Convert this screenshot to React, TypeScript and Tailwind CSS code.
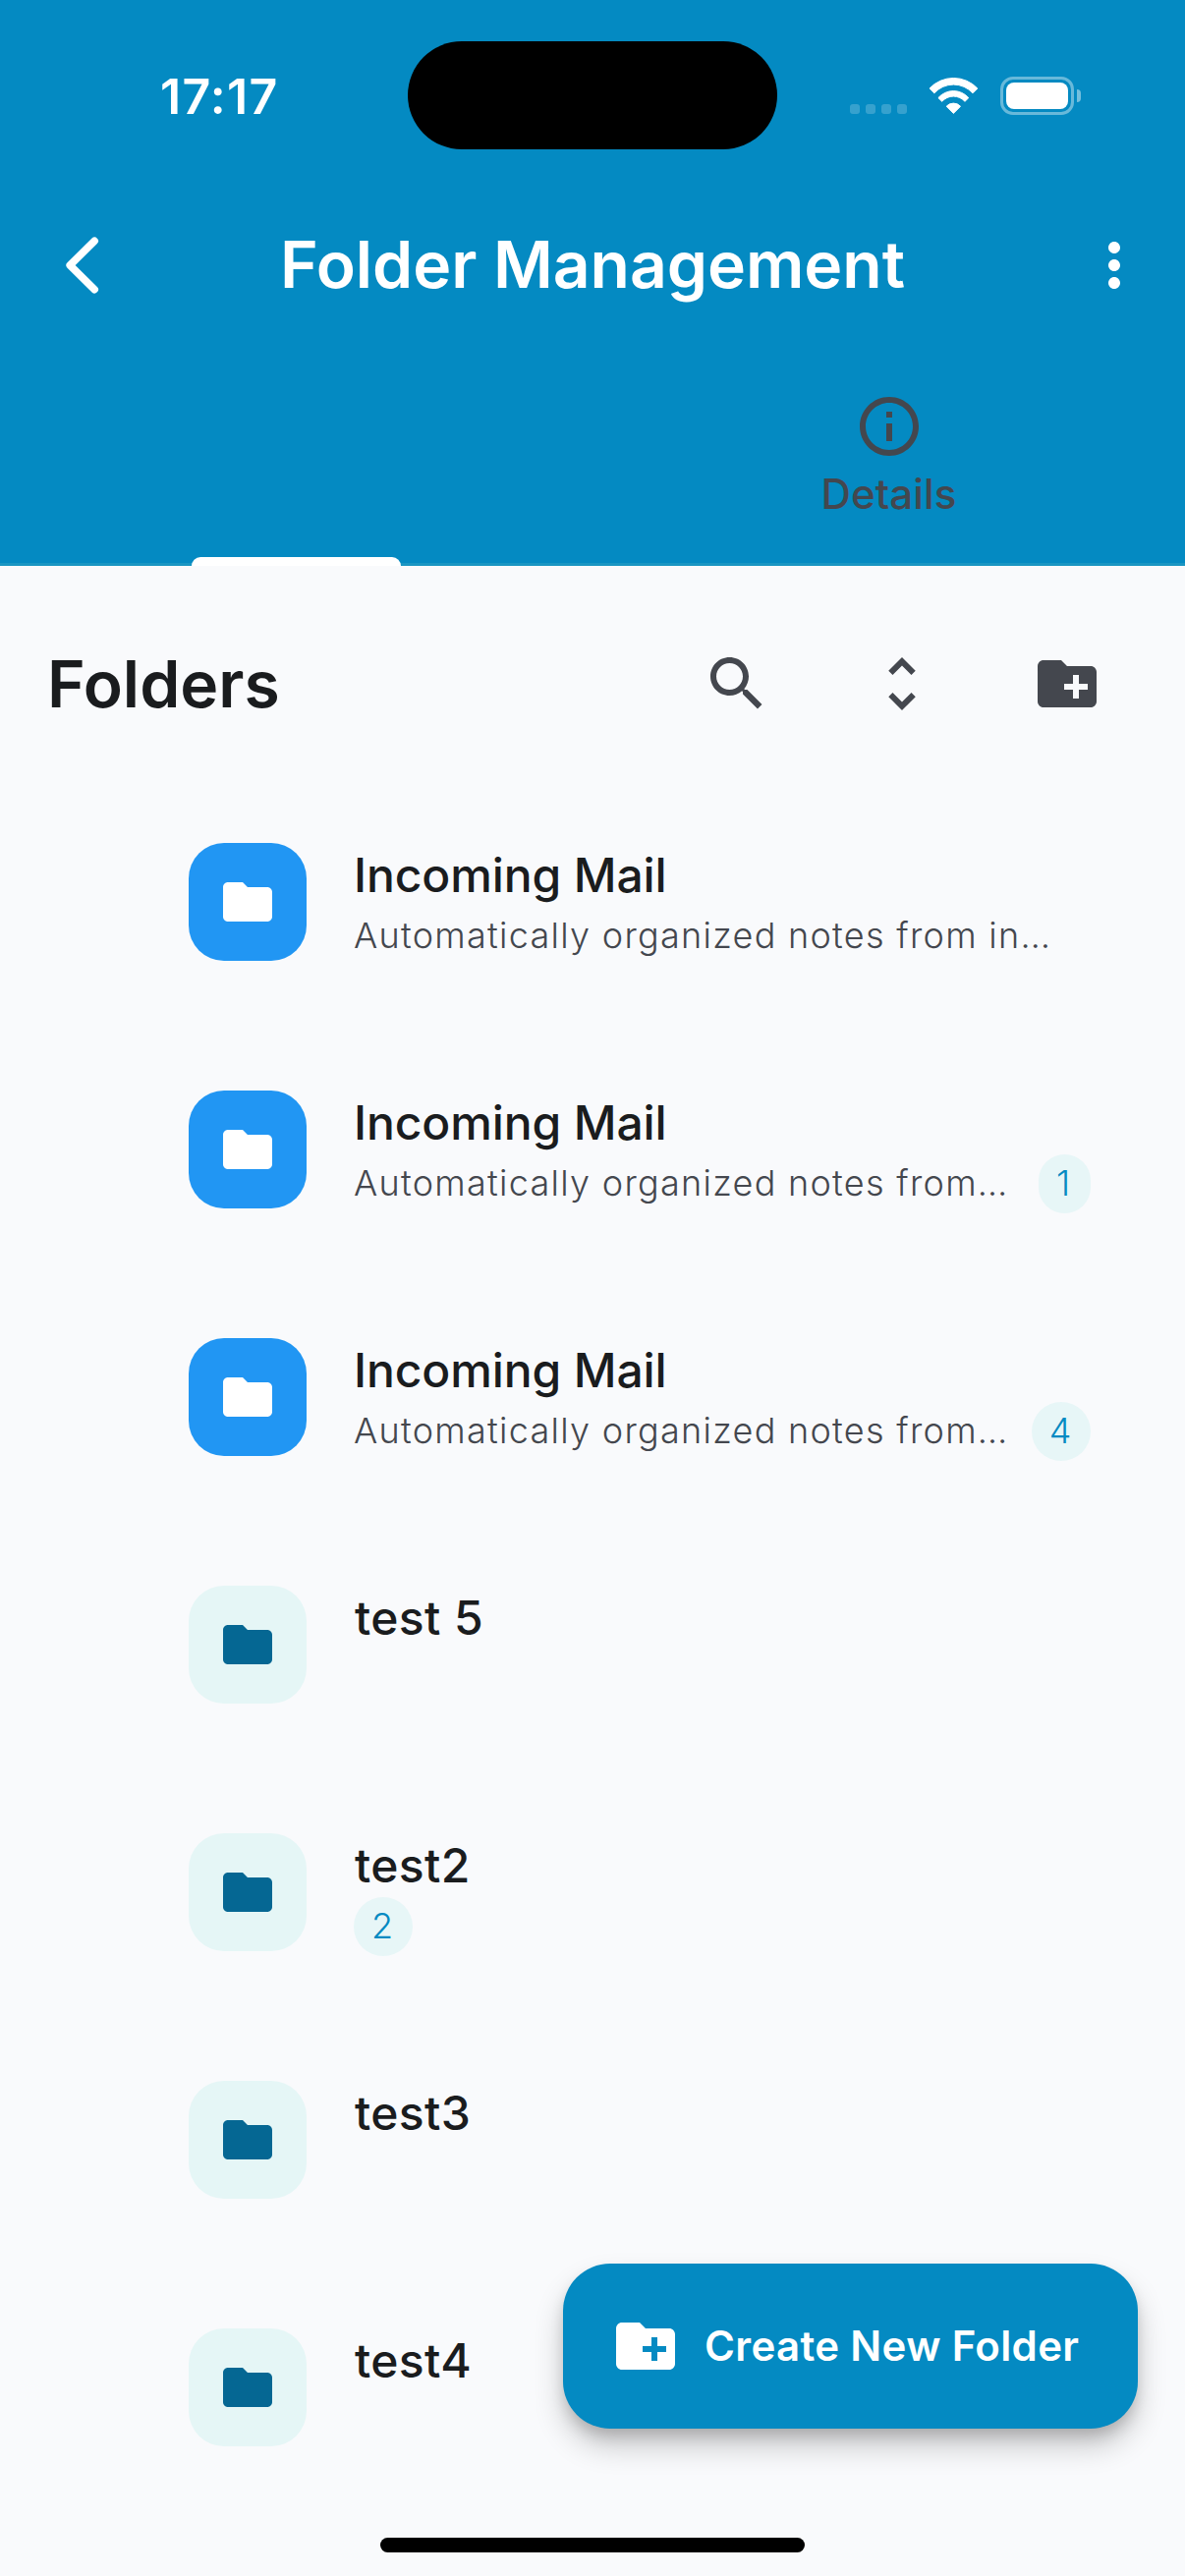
type IconProps = { className?: string };

const MoreIcon = ({ className }: IconProps) => (
  <svg viewBox="0 0 24 24" fill="currentColor" className={className}>
    <path d="M12 8c1.1 0 2-.9 2-2s-.9-2-2-2-2 .9-2 2 .9 2 2 2zm0 2c-1.1 0-2 .9-2 2s.9 2 2 2 2-.9 2-2-.9-2-2-2zm0 6c-1.1 0-2 .9-2 2s.9 2 2 2 2-.9 2-2-.9-2-2-2z" />
  </svg>
);

const InfoIcon = ({ className }: IconProps) => (
  <svg viewBox="0 0 24 24" fill="currentColor" className={className}>
    <path d="M11 7h2v2h-2zm0 4h2v6h-2zm1-9C6.48 2 2 6.48 2 12s4.48 10 10 10 10-4.48 10-10S17.52 2 12 2zm0 18c-4.41 0-8-3.59-8-8s3.59-8 8-8 8 3.59 8 8-3.59 8-8 8z" />
  </svg>
);

const SearchIcon = ({ className }: IconProps) => (
  <svg viewBox="0 0 24 24" fill="currentColor" className={className}>
    <path d="M15.5 14h-.79l-.28-.27C15.41 12.59 16 11.11 16 9.5 16 5.91 13.09 3 9.5 3S3 5.91 3 9.5 5.91 16 9.5 16c1.61 0 3.09-.59 4.23-1.57l.27.28v.79l5 4.99L20.49 19l-4.99-5zm-6 0C7.01 14 5 11.99 5 9.5S7.01 5 9.5 5 14 7.01 14 9.5 11.99 14 9.5 14z" />
  </svg>
);

const UnfoldIcon = ({ className }: IconProps) => (
  <svg viewBox="0 0 24 24" fill="currentColor" className={className}>
    <path d="M12 5.83L15.17 9l1.41-1.41L12 3 7.41 7.59 8.83 9 12 5.83zm0 12.34L8.83 15l-1.41 1.41L12 21l4.59-4.59L15.17 15 12 18.17z" />
  </svg>
);

const FolderIcon = ({ className }: IconProps) => (
  <svg viewBox="0 0 24 24" fill="currentColor" className={className}>
    <path d="M10 4H4c-1.1 0-1.99.9-1.99 2L2 18c0 1.1.9 2 2 2h16c1.1 0 2-.9 2-2V8c0-1.1-.9-2-2-2h-8l-2-2z" />
  </svg>
);

const NewFolderIcon = ({ className }: IconProps) => (
  <svg viewBox="0 0 24 24" fill="currentColor" className={className}>
    <path d="M20 6h-8l-2-2H4c-1.11 0-1.99.89-1.99 2L2 18c0 1.11.89 2 2 2h16c1.11 0 2-.89 2-2V8c0-1.11-.89-2-2-2zm-1 8h-3v3h-2v-3h-3v-2h3V9h2v3h3v2z" />
  </svg>
);

type Folder = { name: string; note?: string; count?: number; mail?: boolean };

const folders: Folder[] = [
  { name: 'Incoming Mail', note: 'Automatically organized notes from in…', mail: true },
  { name: 'Incoming Mail', note: 'Automatically organized notes from…', count: 1, mail: true },
  { name: 'Incoming Mail', note: 'Automatically organized notes from…', count: 4, mail: true },
  { name: 'test 5' },
  { name: 'test2', count: 2 },
  { name: 'test3' },
  { name: 'test4' },
];

function StatusBar() {
  return (
    <div className="grid h-[186px] grid-cols-[415px_376px_415px] grid-rows-[110px] items-center pt-[42px]">
      <div className="pt-[2px] pl-[163px] text-[50px] leading-[60px] font-semibold tracking-[1.3px]">17:17</div>
      <div className="h-[110px] rounded-full bg-black" />
      <div className="flex h-10 items-end pl-[74px]">
        <div className="mb-px flex gap-[6px]">
          <span className="h-[10px] w-[10px] rounded-[3px] bg-white/20" />
          <span className="h-[10px] w-[10px] rounded-[3px] bg-white/20" />
          <span className="h-[10px] w-[10px] rounded-[3px] bg-white/20" />
          <span className="h-[10px] w-[10px] rounded-[3px] bg-white/20" />
        </div>
        <svg viewBox="0 0 51 37" className="mb-px ml-[22px] h-[37px] w-[51px] overflow-visible" fill="white" stroke="white" strokeWidth="1" strokeLinejoin="round">
          <path d="M1 11A33.5 33.5 0 0 1 49.8 11L45 15.8A26.4 26.4 0 0 0 5.8 15.8Z" />
          <path d="M9.9 20.6A20.5 20.5 0 0 1 40.8 20.6L37 24.3A15.6 15.6 0 0 0 13.7 24.3Z" />
          <path d="M18.2 29.3A9.6 9.6 0 0 1 32.5 29.3L25.35 36.4Z" />
        </svg>
        <div className="ml-[22px] h-[39px] w-[75px] rounded-[13px] border-3 border-white/40 p-[3px]">
          <div className="h-full w-full rounded-[8px] bg-white" />
        </div>
        <div className="mb-[13px] ml-[3px] h-[13px] w-[4px] rounded-r-full bg-white/45" />
      </div>
    </div>
  );
}

function AppBar() {
  return (
    <div className="grid h-[168px] grid-cols-[1fr_auto_1fr] items-center pr-9 pl-16">
      <svg viewBox="0 0 40 64" className="h-16 w-10" fill="none" stroke="white" strokeWidth="7.6" strokeLinecap="round" strokeLinejoin="round">
        <path d="M32.2 7.3L7.2 32L32.2 56.7" />
      </svg>
      <h1 className="-ml-7 pb-[2px] text-[66px] leading-[84px] font-semibold tracking-[-0.05px] whitespace-nowrap">Folder Management</h1>
      <MoreIcon className="h-[72px] w-[72px] justify-self-end" />
    </div>
  );
}

function Tabs() {
  return (
    <div className="grid h-[222px] grid-cols-2 border-b-3 border-[#1a96c2]">
      <div className="-mb-[3px] flex items-end justify-center">
        <div className="h-[9px] w-[213px] rounded-t-[9px] bg-white" />
      </div>
      <div className="flex flex-col items-center pt-[44px] text-[#44474e]">
        <InfoIcon className="h-[72px] w-[72px]" />
        <span className="text-[42px] leading-[66px] font-medium tracking-[0.1px]">Details</span>
      </div>
    </div>
  );
}

function FolderRow({ folder }: { folder: Folder }) {
  return (
    <li className="flex h-[252px] pt-[66px] pr-24 pl-48">
      <div
        className={
          folder.mail
            ? 'flex h-[120px] w-[120px] items-center justify-center rounded-[36px] bg-[#2196f3] text-white'
            : 'flex h-[120px] w-[120px] items-center justify-center rounded-[36px] bg-[#e5f6f6] text-[#056793]'
        }
      >
        <FolderIcon className="h-[60px] w-[60px]" />
      </div>
      <div className="ml-12 flex min-w-0 flex-1 flex-col">
        <div className={folder.mail ? 'h-[65px] text-[48px] leading-[65px] font-medium tracking-[-0.12px]' : 'h-[65px] pl-px text-[48px] leading-[65px] font-medium tracking-[0.4px]'}>
          {folder.name}
        </div>
        <div className="flex h-[60px] items-center text-[36px] leading-[60px] font-light">
          {folder.note && <span className="flex-1 pb-[2px] tracking-[1.28px] whitespace-nowrap text-[#44474e]">{folder.note}</span>}
          {folder.count !== undefined && (
            <span className="h-[60px] min-w-[53px] rounded-[30px] bg-[#e7f6f7] px-[18px] leading-[58px] tracking-[1.5px] text-[#048ac2]">{folder.count}</span>
          )}
        </div>
      </div>
    </li>
  );
}

export default function App() {
  return (
    <div className="relative h-[2622px] w-[1206px] overflow-hidden bg-[#f9fafc] font-['Inter',sans-serif] text-[#1a1c1e]">
      <header className="bg-[#048ac2] text-white">
        <StatusBar />
        <AppBar />
        <Tabs />
      </header>
      <main className="pt-6">
        <div className="flex h-48 items-center justify-between pr-12 pl-12">
          <h2 className="text-[66px] leading-[84px] font-semibold">Folders</h2>
          <div className="flex gap-6 text-[#44474e]">
            <button className="flex h-36 w-36 items-center justify-center"><SearchIcon className="h-[72px] w-[72px]" /></button>
            <button className="flex h-36 w-36 items-center justify-center"><UnfoldIcon className="h-[72px] w-[72px]" /></button>
            <button className="flex h-36 w-36 items-center justify-center"><NewFolderIcon className="h-[72px] w-[72px]" /></button>
          </div>
        </div>
        <ul>
          {folders.map((folder, i) => (
            <FolderRow key={i} folder={folder} />
          ))}
        </ul>
      </main>
      <button className="absolute right-12 bottom-[150px] flex h-[168px] w-[585px] items-center rounded-[48px] bg-[#048ac2] pl-12 text-white shadow-[0_9px_15px_-3px_rgba(0,0,0,0.18),0_18px_30px_rgba(0,0,0,0.2)]">
        <NewFolderIcon className="h-[72px] w-[72px]" />
        <span className="ml-6 text-[42px] leading-[60px] font-semibold tracking-[0.35px] whitespace-nowrap">Create New Folder</span>
      </button>
      <div className="absolute bottom-6 left-[387px] h-[15px] w-[432px] rounded-full bg-black" />
    </div>
  );
}
